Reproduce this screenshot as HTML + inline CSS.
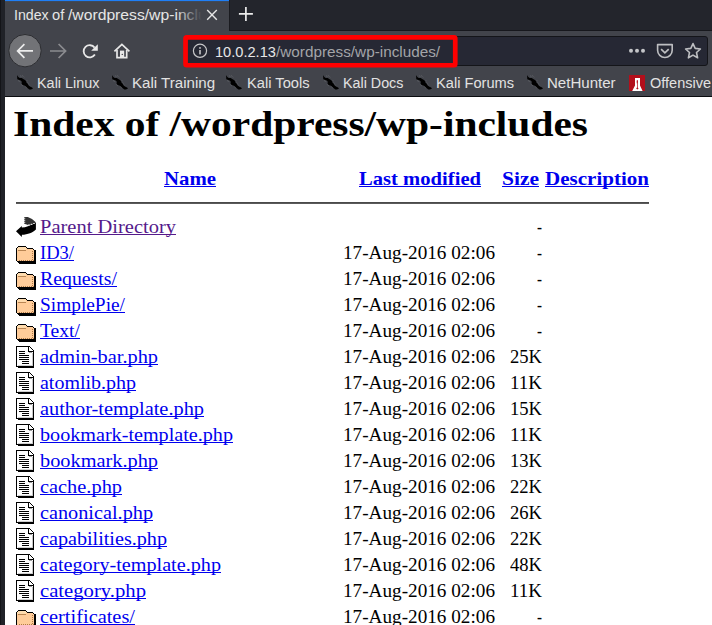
<!DOCTYPE html>
<html><head><meta charset="utf-8"><style>
html,body{margin:0;padding:0}
body{width:712px;height:625px;overflow:hidden;position:relative;background:#42444b;font-family:"Liberation Sans",sans-serif}
.ab{position:absolute}
.ab svg{display:block}
svg.ab{display:block}
.t{position:absolute;white-space:pre;line-height:1;transform-origin:0 0}
</style></head><body>
<!-- window edge -->
<div class="ab" style="left:0;top:0;width:1px;height:625px;background:#131418"></div>
<div class="ab" style="left:1px;top:0;width:4px;height:625px;background:#202228"></div>
<!-- tab bar -->
<div class="ab" style="left:229px;top:0;width:483px;height:31px;background:#23252c"></div>
<div class="ab" style="left:229px;top:0;width:1px;height:31px;background:#1a1b20"></div>
<div class="ab" style="left:230px;top:30px;width:482px;height:1px;background:#17181d"></div>
<div class="ab" style="left:5px;top:0;width:224px;height:1px;background:#1f7ff7"></div>
<div class="ab" style="left:5px;top:1px;width:224px;height:1px;background:#3a4f6e;opacity:.5"></div>
<!-- close x -->
<svg class="ab" style="left:205px;top:8px" width="14" height="14" viewBox="0 0 14 14"><path d="M2.2,2 L11.8,11.7 M11.8,2 L2.2,11.7" stroke="#e6e6e6" stroke-width="1.4"/></svg>
<!-- plus -->
<svg class="ab" style="left:237px;top:5px" width="18" height="18" viewBox="0 0 18 18"><path d="M1.9,8.8 H15.9 M8.9,2 V16" stroke="#ececec" stroke-width="1.7"/></svg>
<!-- back button -->
<svg class="ab" style="left:6px;top:32px" width="40" height="38" viewBox="0 0 40 38">
<circle cx="19" cy="18.7" r="16.2" fill="#727377" stroke="#2c2d31" stroke-width="1"/>
<path d="M11.6,18.9 H27 M18.4,12.1 L11.6,18.9 L18.4,25.9" stroke="#ececec" stroke-width="1.7" fill="none"/>
</svg>
<!-- forward -->
<svg class="ab" style="left:46px;top:40px" width="24" height="22" viewBox="0 0 24 22"><path d="M4,11 H19.6 M12.6,4 L19.6,11 L12.6,18" stroke="#8b8c90" stroke-width="1.7" fill="none"/></svg>
<!-- reload -->
<svg class="ab" style="left:80px;top:40px" width="22" height="22" viewBox="0 0 22 22">
<path d="M14.6,7.6 A6.1,6.1 0 1 0 14.9,14.6" stroke="#e8e8e8" stroke-width="1.8" fill="none"/>
<path d="M11.2,10.8 L17.8,10.8 L17.8,4.2 Z" fill="#e8e8e8"/>
</svg>
<!-- home -->
<svg class="ab" style="left:111px;top:40px" width="22" height="22" viewBox="0 0 22 22">
<path d="M3.4,11.3 L10.9,4.3 L18.4,11.3" stroke="#e8e8e8" stroke-width="1.7" fill="none"/>
<path d="M6.0,10 V17.6 H15.7 V10" stroke="#e8e8e8" stroke-width="1.7" fill="none"/>
<rect x="9" y="10.6" width="4.2" height="7" fill="#e8e8e8"/><circle cx="11.3" cy="14.4" r="0.7" fill="#42444b"/>
</svg>
<!-- url bar -->
<div class="ab" style="left:184px;top:36px;width:522px;height:28px;background:#262834;border:1px solid #141519;border-radius:3px"></div>
<!-- info icon -->
<svg class="ab" style="left:192px;top:43px" width="16" height="16" viewBox="0 0 16 16">
<circle cx="8" cy="7.8" r="6.6" stroke="#c8c8ca" stroke-width="1.2" fill="none"/>
<rect x="7.2" y="7" width="1.6" height="4.4" fill="#c8c8ca"/><circle cx="8" cy="4.9" r="0.95" fill="#c8c8ca"/>
</svg>
<!-- red annotation -->
<svg class="ab" style="left:180px;top:32px" width="282" height="40" viewBox="0 0 282 40"><rect x="5.55" y="5.35" width="269.7" height="27.9" rx="1.2" fill="none" stroke="#ff0000" stroke-width="4.7"/></svg>
<!-- dots -->
<svg class="ab" style="left:626px;top:46px" width="22" height="10" viewBox="0 0 22 10"><g fill="#c4c5c8"><circle cx="5" cy="4.8" r="2"/><circle cx="11" cy="4.8" r="2"/><circle cx="17" cy="4.8" r="2"/></g></svg>
<!-- pocket -->
<svg class="ab" style="left:654px;top:41px" width="22" height="20" viewBox="0 0 22 20">
<path d="M3.6,3.6 H18.2 V9.2 A7.3,7.3 0 0 1 3.6,9.2 Z" stroke="#bdbec1" stroke-width="1.6" fill="none" stroke-linejoin="round"/>
<path d="M7.1,8.1 L10.9,11.9 L14.7,8.1" stroke="#bdbec1" stroke-width="1.7" fill="none"/>
</svg>
<!-- star -->
<svg class="ab" style="left:683px;top:41px" width="20" height="20" viewBox="0 0 20 20">
<path d="M10,2.6 L12.2,7.4 L17.4,8 L13.5,11.5 L14.6,16.8 L10,14.1 L5.4,16.8 L6.5,11.5 L2.6,8 L7.8,7.4 Z" stroke="#bdbec1" stroke-width="1.6" fill="none" stroke-linejoin="round"/>
</svg>
<!-- bookmarks -->
<svg class="ab" style="left:16px;top:74px" width="20" height="18" viewBox="0 0 20 18">
<path d="M1.3,1.15 L2.3,2.9 L3.7,4.0 L5.8,4.0 L7.2,4.9 L8.6,5.8 L10.1,6.9 L10.4,8.6 L11.5,9.5 L12.7,11.5 L14.4,12.7 L16.1,13.5 L17,14.4 L15,15.6 L13.3,15.6 L11.5,14.1 L10.1,12.7 L8.4,11.5 L6.6,10.95 L5.5,9.5 L5.8,7.8 L4.6,6.6 L2.6,5.8 L1.3,5.2 L1.15,1.7 Z" fill="#000"/>
<path d="M4.3,1.9 L6.2,2.6 M6.6,1.7 L8.8,3.6 M11,6.6 L11.7,8.3 M12.6,9.7 L13.6,11.2 M2.2,6.6 L4.4,7.8 M4.9,10.3 L6.6,11.7 M9.5,12.8 L11.6,14.8" stroke="#8d8e92" stroke-width="0.6" stroke-dasharray="0.6 0.9" fill="none"/>
</svg>
<svg class="ab" style="left:110.8px;top:74px" width="20" height="18" viewBox="0 0 20 18">
<path d="M1.3,1.15 L2.3,2.9 L3.7,4.0 L5.8,4.0 L7.2,4.9 L8.6,5.8 L10.1,6.9 L10.4,8.6 L11.5,9.5 L12.7,11.5 L14.4,12.7 L16.1,13.5 L17,14.4 L15,15.6 L13.3,15.6 L11.5,14.1 L10.1,12.7 L8.4,11.5 L6.6,10.95 L5.5,9.5 L5.8,7.8 L4.6,6.6 L2.6,5.8 L1.3,5.2 L1.15,1.7 Z" fill="#000"/>
<path d="M4.3,1.9 L6.2,2.6 M6.6,1.7 L8.8,3.6 M11,6.6 L11.7,8.3 M12.6,9.7 L13.6,11.2 M2.2,6.6 L4.4,7.8 M4.9,10.3 L6.6,11.7 M9.5,12.8 L11.6,14.8" stroke="#8d8e92" stroke-width="0.6" stroke-dasharray="0.6 0.9" fill="none"/>
</svg>
<svg class="ab" style="left:225.4px;top:74px" width="20" height="18" viewBox="0 0 20 18">
<path d="M1.3,1.15 L2.3,2.9 L3.7,4.0 L5.8,4.0 L7.2,4.9 L8.6,5.8 L10.1,6.9 L10.4,8.6 L11.5,9.5 L12.7,11.5 L14.4,12.7 L16.1,13.5 L17,14.4 L15,15.6 L13.3,15.6 L11.5,14.1 L10.1,12.7 L8.4,11.5 L6.6,10.95 L5.5,9.5 L5.8,7.8 L4.6,6.6 L2.6,5.8 L1.3,5.2 L1.15,1.7 Z" fill="#000"/>
<path d="M4.3,1.9 L6.2,2.6 M6.6,1.7 L8.8,3.6 M11,6.6 L11.7,8.3 M12.6,9.7 L13.6,11.2 M2.2,6.6 L4.4,7.8 M4.9,10.3 L6.6,11.7 M9.5,12.8 L11.6,14.8" stroke="#8d8e92" stroke-width="0.6" stroke-dasharray="0.6 0.9" fill="none"/>
</svg>
<svg class="ab" style="left:321.8px;top:74px" width="20" height="18" viewBox="0 0 20 18">
<path d="M1.3,1.15 L2.3,2.9 L3.7,4.0 L5.8,4.0 L7.2,4.9 L8.6,5.8 L10.1,6.9 L10.4,8.6 L11.5,9.5 L12.7,11.5 L14.4,12.7 L16.1,13.5 L17,14.4 L15,15.6 L13.3,15.6 L11.5,14.1 L10.1,12.7 L8.4,11.5 L6.6,10.95 L5.5,9.5 L5.8,7.8 L4.6,6.6 L2.6,5.8 L1.3,5.2 L1.15,1.7 Z" fill="#000"/>
<path d="M4.3,1.9 L6.2,2.6 M6.6,1.7 L8.8,3.6 M11,6.6 L11.7,8.3 M12.6,9.7 L13.6,11.2 M2.2,6.6 L4.4,7.8 M4.9,10.3 L6.6,11.7 M9.5,12.8 L11.6,14.8" stroke="#8d8e92" stroke-width="0.6" stroke-dasharray="0.6 0.9" fill="none"/>
</svg>
<svg class="ab" style="left:414.7px;top:74px" width="20" height="18" viewBox="0 0 20 18">
<path d="M1.3,1.15 L2.3,2.9 L3.7,4.0 L5.8,4.0 L7.2,4.9 L8.6,5.8 L10.1,6.9 L10.4,8.6 L11.5,9.5 L12.7,11.5 L14.4,12.7 L16.1,13.5 L17,14.4 L15,15.6 L13.3,15.6 L11.5,14.1 L10.1,12.7 L8.4,11.5 L6.6,10.95 L5.5,9.5 L5.8,7.8 L4.6,6.6 L2.6,5.8 L1.3,5.2 L1.15,1.7 Z" fill="#000"/>
<path d="M4.3,1.9 L6.2,2.6 M6.6,1.7 L8.8,3.6 M11,6.6 L11.7,8.3 M12.6,9.7 L13.6,11.2 M2.2,6.6 L4.4,7.8 M4.9,10.3 L6.6,11.7 M9.5,12.8 L11.6,14.8" stroke="#8d8e92" stroke-width="0.6" stroke-dasharray="0.6 0.9" fill="none"/>
</svg>
<svg class="ab" style="left:525.5px;top:74px" width="20" height="18" viewBox="0 0 20 18">
<path d="M1.3,1.15 L2.3,2.9 L3.7,4.0 L5.8,4.0 L7.2,4.9 L8.6,5.8 L10.1,6.9 L10.4,8.6 L11.5,9.5 L12.7,11.5 L14.4,12.7 L16.1,13.5 L17,14.4 L15,15.6 L13.3,15.6 L11.5,14.1 L10.1,12.7 L8.4,11.5 L6.6,10.95 L5.5,9.5 L5.8,7.8 L4.6,6.6 L2.6,5.8 L1.3,5.2 L1.15,1.7 Z" fill="#000"/>
<path d="M4.3,1.9 L6.2,2.6 M6.6,1.7 L8.8,3.6 M11,6.6 L11.7,8.3 M12.6,9.7 L13.6,11.2 M2.2,6.6 L4.4,7.8 M4.9,10.3 L6.6,11.7 M9.5,12.8 L11.6,14.8" stroke="#8d8e92" stroke-width="0.6" stroke-dasharray="0.6 0.9" fill="none"/>
</svg>
<svg class="ab" style="left:629px;top:75px" width="16" height="16" viewBox="0 0 16 16">
<rect width="16" height="16" fill="#b30f1b"/>
<path d="M6,3 H11 V10.5 L13.6,16 H3.2 L6,10.5 Z" fill="#fff"/>
<path d="M8.3,5 C9.1,5 9.1,7 8.7,9 L8.7,12.5 L9.6,13.5 L8.3,14.6 L7.2,13.5 L8,12.5 L8,9 C7.5,7 7.5,5 8.3,5 Z" fill="#b30f1b"/>
</svg>
<!-- bottom line of chrome -->
<div class="ab" style="left:5px;top:96px;width:707px;height:1px;background:#0b0c10"></div>
<!-- page -->
<div class="ab" style="left:5px;top:97px;width:707px;height:528px;background:#fff"></div>
<div class="ab" style="left:16px;top:202px;width:633px;height:1px;background:#4a4a4a"></div>
<div class="ab" style="left:16px;top:203px;width:633px;height:1px;background:#5a5a5a"></div>
<div class="ab" style="left:16px;top:216px;width:20px;height:22px"><svg width="20" height="22" viewBox="0 0 20 22">
<path d="M0,15.3 L5.8,9.9 L5.8,11.6 C9.5,11.4 15.5,9.2 19.9,6.2 L19.9,13.4 C17.3,16.3 11.5,18.4 5.9,18.8 L5.8,21 Z" fill="#000"/>
<path d="M8.2,0.9 L11.8,0.9 L16,2.9 L19.5,6 L18.5,7.6 L12.8,9.3 L10.6,8.5 L8.2,7.7 Z" fill="#333"/>
<g fill="#fff"><rect x="8.2" y="1.8" width="1" height="1"/><rect x="8.2" y="3.8" width="1" height="1"/><rect x="8.2" y="5.8" width="1" height="1"/>
<rect x="12.2" y="8.4" width="1.6" height="1"/><rect x="14.8" y="7.8" width="1.6" height="1"/><rect x="17.3" y="7" width="1.4" height="1"/></g>
</svg></div><div class="ab" style="left:16px;top:242px;width:20px;height:22px"><svg width="20" height="22" viewBox="0 0 20 22" shape-rendering="crispEdges">
<path fill="#ffcc99" d="M1,5h9v1h7v1h1v12h-17z"/>
<rect x="2" y="5" width="8" height="3" fill="#ffdcae"/><rect x="1" y="6" width="1" height="2" fill="#ffdcae"/>
<rect x="2" y="4" width="8" height="1"/><rect x="1" y="5" width="1" height="1"/><rect x="0" y="6" width="1" height="13"/>
<rect x="10" y="5" width="1" height="1"/><rect x="11" y="6" width="6" height="1"/><rect x="17" y="7" width="1" height="1"/>
<rect x="18" y="8" width="2" height="13"/><rect x="1" y="19" width="18" height="1"/><rect x="2" y="20" width="18" height="1"/><rect x="3" y="21" width="17" height="1"/>
<rect x="2" y="8" width="8" height="1" fill="#b98552"/>
<g fill="#b07a48"><rect x="16" y="9" width="1" height="1"/><rect x="16" y="11" width="1" height="1"/><rect x="16" y="13" width="1" height="1"/><rect x="16" y="15" width="1" height="1"/><rect x="16" y="17" width="1" height="1"/>
<rect x="3" y="18" width="1" height="1"/><rect x="5" y="18" width="1" height="1"/><rect x="7" y="18" width="1" height="1"/><rect x="9" y="18" width="1" height="1"/><rect x="11" y="18" width="1" height="1"/><rect x="13" y="18" width="1" height="1"/><rect x="15" y="18" width="1" height="1"/><rect x="17" y="18" width="1" height="1"/></g>
</svg></div><div class="ab" style="left:16px;top:268px;width:20px;height:22px"><svg width="20" height="22" viewBox="0 0 20 22" shape-rendering="crispEdges">
<path fill="#ffcc99" d="M1,5h9v1h7v1h1v12h-17z"/>
<rect x="2" y="5" width="8" height="3" fill="#ffdcae"/><rect x="1" y="6" width="1" height="2" fill="#ffdcae"/>
<rect x="2" y="4" width="8" height="1"/><rect x="1" y="5" width="1" height="1"/><rect x="0" y="6" width="1" height="13"/>
<rect x="10" y="5" width="1" height="1"/><rect x="11" y="6" width="6" height="1"/><rect x="17" y="7" width="1" height="1"/>
<rect x="18" y="8" width="2" height="13"/><rect x="1" y="19" width="18" height="1"/><rect x="2" y="20" width="18" height="1"/><rect x="3" y="21" width="17" height="1"/>
<rect x="2" y="8" width="8" height="1" fill="#b98552"/>
<g fill="#b07a48"><rect x="16" y="9" width="1" height="1"/><rect x="16" y="11" width="1" height="1"/><rect x="16" y="13" width="1" height="1"/><rect x="16" y="15" width="1" height="1"/><rect x="16" y="17" width="1" height="1"/>
<rect x="3" y="18" width="1" height="1"/><rect x="5" y="18" width="1" height="1"/><rect x="7" y="18" width="1" height="1"/><rect x="9" y="18" width="1" height="1"/><rect x="11" y="18" width="1" height="1"/><rect x="13" y="18" width="1" height="1"/><rect x="15" y="18" width="1" height="1"/><rect x="17" y="18" width="1" height="1"/></g>
</svg></div><div class="ab" style="left:16px;top:294px;width:20px;height:22px"><svg width="20" height="22" viewBox="0 0 20 22" shape-rendering="crispEdges">
<path fill="#ffcc99" d="M1,5h9v1h7v1h1v12h-17z"/>
<rect x="2" y="5" width="8" height="3" fill="#ffdcae"/><rect x="1" y="6" width="1" height="2" fill="#ffdcae"/>
<rect x="2" y="4" width="8" height="1"/><rect x="1" y="5" width="1" height="1"/><rect x="0" y="6" width="1" height="13"/>
<rect x="10" y="5" width="1" height="1"/><rect x="11" y="6" width="6" height="1"/><rect x="17" y="7" width="1" height="1"/>
<rect x="18" y="8" width="2" height="13"/><rect x="1" y="19" width="18" height="1"/><rect x="2" y="20" width="18" height="1"/><rect x="3" y="21" width="17" height="1"/>
<rect x="2" y="8" width="8" height="1" fill="#b98552"/>
<g fill="#b07a48"><rect x="16" y="9" width="1" height="1"/><rect x="16" y="11" width="1" height="1"/><rect x="16" y="13" width="1" height="1"/><rect x="16" y="15" width="1" height="1"/><rect x="16" y="17" width="1" height="1"/>
<rect x="3" y="18" width="1" height="1"/><rect x="5" y="18" width="1" height="1"/><rect x="7" y="18" width="1" height="1"/><rect x="9" y="18" width="1" height="1"/><rect x="11" y="18" width="1" height="1"/><rect x="13" y="18" width="1" height="1"/><rect x="15" y="18" width="1" height="1"/><rect x="17" y="18" width="1" height="1"/></g>
</svg></div><div class="ab" style="left:16px;top:320px;width:20px;height:22px"><svg width="20" height="22" viewBox="0 0 20 22" shape-rendering="crispEdges">
<path fill="#ffcc99" d="M1,5h9v1h7v1h1v12h-17z"/>
<rect x="2" y="5" width="8" height="3" fill="#ffdcae"/><rect x="1" y="6" width="1" height="2" fill="#ffdcae"/>
<rect x="2" y="4" width="8" height="1"/><rect x="1" y="5" width="1" height="1"/><rect x="0" y="6" width="1" height="13"/>
<rect x="10" y="5" width="1" height="1"/><rect x="11" y="6" width="6" height="1"/><rect x="17" y="7" width="1" height="1"/>
<rect x="18" y="8" width="2" height="13"/><rect x="1" y="19" width="18" height="1"/><rect x="2" y="20" width="18" height="1"/><rect x="3" y="21" width="17" height="1"/>
<rect x="2" y="8" width="8" height="1" fill="#b98552"/>
<g fill="#b07a48"><rect x="16" y="9" width="1" height="1"/><rect x="16" y="11" width="1" height="1"/><rect x="16" y="13" width="1" height="1"/><rect x="16" y="15" width="1" height="1"/><rect x="16" y="17" width="1" height="1"/>
<rect x="3" y="18" width="1" height="1"/><rect x="5" y="18" width="1" height="1"/><rect x="7" y="18" width="1" height="1"/><rect x="9" y="18" width="1" height="1"/><rect x="11" y="18" width="1" height="1"/><rect x="13" y="18" width="1" height="1"/><rect x="15" y="18" width="1" height="1"/><rect x="17" y="18" width="1" height="1"/></g>
</svg></div><div class="ab" style="left:16px;top:346px;width:20px;height:22px"><svg width="20" height="22" viewBox="0 0 20 22" shape-rendering="crispEdges">
<path fill="#fff" d="M1,1h11v5h5v15h-16z"/>
<path fill="#fff" d="M12,1h1l4,4v1h-5z"/>
<rect x="2" y="19" width="15" height="1" fill="#d0d0d0"/><rect x="16" y="7" width="1" height="13" fill="#c8c8c8"/>
<rect x="13" y="6" width="3" height="1" fill="#a0a0a0"/>
<rect x="0" y="0" width="13" height="1"/><rect x="0" y="1" width="1" height="20"/>
<rect x="12" y="1" width="1" height="5"/><rect x="12" y="5" width="6" height="1"/>
<path d="M13,0h0.6l4.4,4.4v0.6h-1z" />
<rect x="17" y="5" width="1" height="17"/><rect x="1" y="20" width="17" height="1"/><rect x="2" y="21" width="16" height="1"/>
<rect x="3" y="5" width="6" height="1"/><rect x="3" y="7" width="6" height="1"/>
<rect x="3" y="9" width="10" height="1"/><rect x="3" y="11" width="10" height="1"/><rect x="3" y="13" width="10" height="1"/>
<rect x="6" y="15" width="7" height="1"/><rect x="6" y="17" width="7" height="1"/>
</svg></div><div class="ab" style="left:16px;top:372px;width:20px;height:22px"><svg width="20" height="22" viewBox="0 0 20 22" shape-rendering="crispEdges">
<path fill="#fff" d="M1,1h11v5h5v15h-16z"/>
<path fill="#fff" d="M12,1h1l4,4v1h-5z"/>
<rect x="2" y="19" width="15" height="1" fill="#d0d0d0"/><rect x="16" y="7" width="1" height="13" fill="#c8c8c8"/>
<rect x="13" y="6" width="3" height="1" fill="#a0a0a0"/>
<rect x="0" y="0" width="13" height="1"/><rect x="0" y="1" width="1" height="20"/>
<rect x="12" y="1" width="1" height="5"/><rect x="12" y="5" width="6" height="1"/>
<path d="M13,0h0.6l4.4,4.4v0.6h-1z" />
<rect x="17" y="5" width="1" height="17"/><rect x="1" y="20" width="17" height="1"/><rect x="2" y="21" width="16" height="1"/>
<rect x="3" y="5" width="6" height="1"/><rect x="3" y="7" width="6" height="1"/>
<rect x="3" y="9" width="10" height="1"/><rect x="3" y="11" width="10" height="1"/><rect x="3" y="13" width="10" height="1"/>
<rect x="6" y="15" width="7" height="1"/><rect x="6" y="17" width="7" height="1"/>
</svg></div><div class="ab" style="left:16px;top:398px;width:20px;height:22px"><svg width="20" height="22" viewBox="0 0 20 22" shape-rendering="crispEdges">
<path fill="#fff" d="M1,1h11v5h5v15h-16z"/>
<path fill="#fff" d="M12,1h1l4,4v1h-5z"/>
<rect x="2" y="19" width="15" height="1" fill="#d0d0d0"/><rect x="16" y="7" width="1" height="13" fill="#c8c8c8"/>
<rect x="13" y="6" width="3" height="1" fill="#a0a0a0"/>
<rect x="0" y="0" width="13" height="1"/><rect x="0" y="1" width="1" height="20"/>
<rect x="12" y="1" width="1" height="5"/><rect x="12" y="5" width="6" height="1"/>
<path d="M13,0h0.6l4.4,4.4v0.6h-1z" />
<rect x="17" y="5" width="1" height="17"/><rect x="1" y="20" width="17" height="1"/><rect x="2" y="21" width="16" height="1"/>
<rect x="3" y="5" width="6" height="1"/><rect x="3" y="7" width="6" height="1"/>
<rect x="3" y="9" width="10" height="1"/><rect x="3" y="11" width="10" height="1"/><rect x="3" y="13" width="10" height="1"/>
<rect x="6" y="15" width="7" height="1"/><rect x="6" y="17" width="7" height="1"/>
</svg></div><div class="ab" style="left:16px;top:424px;width:20px;height:22px"><svg width="20" height="22" viewBox="0 0 20 22" shape-rendering="crispEdges">
<path fill="#fff" d="M1,1h11v5h5v15h-16z"/>
<path fill="#fff" d="M12,1h1l4,4v1h-5z"/>
<rect x="2" y="19" width="15" height="1" fill="#d0d0d0"/><rect x="16" y="7" width="1" height="13" fill="#c8c8c8"/>
<rect x="13" y="6" width="3" height="1" fill="#a0a0a0"/>
<rect x="0" y="0" width="13" height="1"/><rect x="0" y="1" width="1" height="20"/>
<rect x="12" y="1" width="1" height="5"/><rect x="12" y="5" width="6" height="1"/>
<path d="M13,0h0.6l4.4,4.4v0.6h-1z" />
<rect x="17" y="5" width="1" height="17"/><rect x="1" y="20" width="17" height="1"/><rect x="2" y="21" width="16" height="1"/>
<rect x="3" y="5" width="6" height="1"/><rect x="3" y="7" width="6" height="1"/>
<rect x="3" y="9" width="10" height="1"/><rect x="3" y="11" width="10" height="1"/><rect x="3" y="13" width="10" height="1"/>
<rect x="6" y="15" width="7" height="1"/><rect x="6" y="17" width="7" height="1"/>
</svg></div><div class="ab" style="left:16px;top:450px;width:20px;height:22px"><svg width="20" height="22" viewBox="0 0 20 22" shape-rendering="crispEdges">
<path fill="#fff" d="M1,1h11v5h5v15h-16z"/>
<path fill="#fff" d="M12,1h1l4,4v1h-5z"/>
<rect x="2" y="19" width="15" height="1" fill="#d0d0d0"/><rect x="16" y="7" width="1" height="13" fill="#c8c8c8"/>
<rect x="13" y="6" width="3" height="1" fill="#a0a0a0"/>
<rect x="0" y="0" width="13" height="1"/><rect x="0" y="1" width="1" height="20"/>
<rect x="12" y="1" width="1" height="5"/><rect x="12" y="5" width="6" height="1"/>
<path d="M13,0h0.6l4.4,4.4v0.6h-1z" />
<rect x="17" y="5" width="1" height="17"/><rect x="1" y="20" width="17" height="1"/><rect x="2" y="21" width="16" height="1"/>
<rect x="3" y="5" width="6" height="1"/><rect x="3" y="7" width="6" height="1"/>
<rect x="3" y="9" width="10" height="1"/><rect x="3" y="11" width="10" height="1"/><rect x="3" y="13" width="10" height="1"/>
<rect x="6" y="15" width="7" height="1"/><rect x="6" y="17" width="7" height="1"/>
</svg></div><div class="ab" style="left:16px;top:476px;width:20px;height:22px"><svg width="20" height="22" viewBox="0 0 20 22" shape-rendering="crispEdges">
<path fill="#fff" d="M1,1h11v5h5v15h-16z"/>
<path fill="#fff" d="M12,1h1l4,4v1h-5z"/>
<rect x="2" y="19" width="15" height="1" fill="#d0d0d0"/><rect x="16" y="7" width="1" height="13" fill="#c8c8c8"/>
<rect x="13" y="6" width="3" height="1" fill="#a0a0a0"/>
<rect x="0" y="0" width="13" height="1"/><rect x="0" y="1" width="1" height="20"/>
<rect x="12" y="1" width="1" height="5"/><rect x="12" y="5" width="6" height="1"/>
<path d="M13,0h0.6l4.4,4.4v0.6h-1z" />
<rect x="17" y="5" width="1" height="17"/><rect x="1" y="20" width="17" height="1"/><rect x="2" y="21" width="16" height="1"/>
<rect x="3" y="5" width="6" height="1"/><rect x="3" y="7" width="6" height="1"/>
<rect x="3" y="9" width="10" height="1"/><rect x="3" y="11" width="10" height="1"/><rect x="3" y="13" width="10" height="1"/>
<rect x="6" y="15" width="7" height="1"/><rect x="6" y="17" width="7" height="1"/>
</svg></div><div class="ab" style="left:16px;top:502px;width:20px;height:22px"><svg width="20" height="22" viewBox="0 0 20 22" shape-rendering="crispEdges">
<path fill="#fff" d="M1,1h11v5h5v15h-16z"/>
<path fill="#fff" d="M12,1h1l4,4v1h-5z"/>
<rect x="2" y="19" width="15" height="1" fill="#d0d0d0"/><rect x="16" y="7" width="1" height="13" fill="#c8c8c8"/>
<rect x="13" y="6" width="3" height="1" fill="#a0a0a0"/>
<rect x="0" y="0" width="13" height="1"/><rect x="0" y="1" width="1" height="20"/>
<rect x="12" y="1" width="1" height="5"/><rect x="12" y="5" width="6" height="1"/>
<path d="M13,0h0.6l4.4,4.4v0.6h-1z" />
<rect x="17" y="5" width="1" height="17"/><rect x="1" y="20" width="17" height="1"/><rect x="2" y="21" width="16" height="1"/>
<rect x="3" y="5" width="6" height="1"/><rect x="3" y="7" width="6" height="1"/>
<rect x="3" y="9" width="10" height="1"/><rect x="3" y="11" width="10" height="1"/><rect x="3" y="13" width="10" height="1"/>
<rect x="6" y="15" width="7" height="1"/><rect x="6" y="17" width="7" height="1"/>
</svg></div><div class="ab" style="left:16px;top:528px;width:20px;height:22px"><svg width="20" height="22" viewBox="0 0 20 22" shape-rendering="crispEdges">
<path fill="#fff" d="M1,1h11v5h5v15h-16z"/>
<path fill="#fff" d="M12,1h1l4,4v1h-5z"/>
<rect x="2" y="19" width="15" height="1" fill="#d0d0d0"/><rect x="16" y="7" width="1" height="13" fill="#c8c8c8"/>
<rect x="13" y="6" width="3" height="1" fill="#a0a0a0"/>
<rect x="0" y="0" width="13" height="1"/><rect x="0" y="1" width="1" height="20"/>
<rect x="12" y="1" width="1" height="5"/><rect x="12" y="5" width="6" height="1"/>
<path d="M13,0h0.6l4.4,4.4v0.6h-1z" />
<rect x="17" y="5" width="1" height="17"/><rect x="1" y="20" width="17" height="1"/><rect x="2" y="21" width="16" height="1"/>
<rect x="3" y="5" width="6" height="1"/><rect x="3" y="7" width="6" height="1"/>
<rect x="3" y="9" width="10" height="1"/><rect x="3" y="11" width="10" height="1"/><rect x="3" y="13" width="10" height="1"/>
<rect x="6" y="15" width="7" height="1"/><rect x="6" y="17" width="7" height="1"/>
</svg></div><div class="ab" style="left:16px;top:554px;width:20px;height:22px"><svg width="20" height="22" viewBox="0 0 20 22" shape-rendering="crispEdges">
<path fill="#fff" d="M1,1h11v5h5v15h-16z"/>
<path fill="#fff" d="M12,1h1l4,4v1h-5z"/>
<rect x="2" y="19" width="15" height="1" fill="#d0d0d0"/><rect x="16" y="7" width="1" height="13" fill="#c8c8c8"/>
<rect x="13" y="6" width="3" height="1" fill="#a0a0a0"/>
<rect x="0" y="0" width="13" height="1"/><rect x="0" y="1" width="1" height="20"/>
<rect x="12" y="1" width="1" height="5"/><rect x="12" y="5" width="6" height="1"/>
<path d="M13,0h0.6l4.4,4.4v0.6h-1z" />
<rect x="17" y="5" width="1" height="17"/><rect x="1" y="20" width="17" height="1"/><rect x="2" y="21" width="16" height="1"/>
<rect x="3" y="5" width="6" height="1"/><rect x="3" y="7" width="6" height="1"/>
<rect x="3" y="9" width="10" height="1"/><rect x="3" y="11" width="10" height="1"/><rect x="3" y="13" width="10" height="1"/>
<rect x="6" y="15" width="7" height="1"/><rect x="6" y="17" width="7" height="1"/>
</svg></div><div class="ab" style="left:16px;top:580px;width:20px;height:22px"><svg width="20" height="22" viewBox="0 0 20 22" shape-rendering="crispEdges">
<path fill="#fff" d="M1,1h11v5h5v15h-16z"/>
<path fill="#fff" d="M12,1h1l4,4v1h-5z"/>
<rect x="2" y="19" width="15" height="1" fill="#d0d0d0"/><rect x="16" y="7" width="1" height="13" fill="#c8c8c8"/>
<rect x="13" y="6" width="3" height="1" fill="#a0a0a0"/>
<rect x="0" y="0" width="13" height="1"/><rect x="0" y="1" width="1" height="20"/>
<rect x="12" y="1" width="1" height="5"/><rect x="12" y="5" width="6" height="1"/>
<path d="M13,0h0.6l4.4,4.4v0.6h-1z" />
<rect x="17" y="5" width="1" height="17"/><rect x="1" y="20" width="17" height="1"/><rect x="2" y="21" width="16" height="1"/>
<rect x="3" y="5" width="6" height="1"/><rect x="3" y="7" width="6" height="1"/>
<rect x="3" y="9" width="10" height="1"/><rect x="3" y="11" width="10" height="1"/><rect x="3" y="13" width="10" height="1"/>
<rect x="6" y="15" width="7" height="1"/><rect x="6" y="17" width="7" height="1"/>
</svg></div><div class="ab" style="left:16px;top:606px;width:20px;height:22px"><svg width="20" height="22" viewBox="0 0 20 22" shape-rendering="crispEdges">
<path fill="#ffcc99" d="M1,5h9v1h7v1h1v12h-17z"/>
<rect x="2" y="5" width="8" height="3" fill="#ffdcae"/><rect x="1" y="6" width="1" height="2" fill="#ffdcae"/>
<rect x="2" y="4" width="8" height="1"/><rect x="1" y="5" width="1" height="1"/><rect x="0" y="6" width="1" height="13"/>
<rect x="10" y="5" width="1" height="1"/><rect x="11" y="6" width="6" height="1"/><rect x="17" y="7" width="1" height="1"/>
<rect x="18" y="8" width="2" height="13"/><rect x="1" y="19" width="18" height="1"/><rect x="2" y="20" width="18" height="1"/><rect x="3" y="21" width="17" height="1"/>
<rect x="2" y="8" width="8" height="1" fill="#b98552"/>
<g fill="#b07a48"><rect x="16" y="9" width="1" height="1"/><rect x="16" y="11" width="1" height="1"/><rect x="16" y="13" width="1" height="1"/><rect x="16" y="15" width="1" height="1"/><rect x="16" y="17" width="1" height="1"/>
<rect x="3" y="18" width="1" height="1"/><rect x="5" y="18" width="1" height="1"/><rect x="7" y="18" width="1" height="1"/><rect x="9" y="18" width="1" height="1"/><rect x="11" y="18" width="1" height="1"/><rect x="13" y="18" width="1" height="1"/><rect x="15" y="18" width="1" height="1"/><rect x="17" y="18" width="1" height="1"/></g>
</svg></div>
<div class="t" style="left:13.00px;top:107px;font-family:'Liberation Serif';font-size:35.6px;font-weight:bold;color:#000;transform:scaleX(1.1650)">Index of /wordpress/wp-includes</div>
<div class="t" style="left:164.00px;top:171px;font-family:'Liberation Serif';font-size:17.8px;font-weight:bold;color:#0000ee;transform:scaleX(1.1702)">Name</div>
<div style="position:absolute;left:164px;top:186px;width:52px;height:1px;background:#0000ee"></div>
<div class="t" style="left:359.00px;top:171px;font-family:'Liberation Serif';font-size:17.8px;font-weight:bold;color:#0000ee;transform:scaleX(1.1596)">Last modified</div>
<div style="position:absolute;left:359px;top:186px;width:122px;height:1px;background:#0000ee"></div>
<div class="t" style="left:502.00px;top:171px;font-family:'Liberation Serif';font-size:17.8px;font-weight:bold;color:#0000ee;transform:scaleX(1.2086)">Size</div>
<div style="position:absolute;left:502px;top:186px;width:37px;height:1px;background:#0000ee"></div>
<div class="t" style="left:545.00px;top:171px;font-family:'Liberation Serif';font-size:17.8px;font-weight:bold;color:#0000ee;transform:scaleX(1.1831)">Description</div>
<div style="position:absolute;left:545px;top:186px;width:104px;height:1px;background:#0000ee"></div>
<div class="t" style="left:40.00px;top:219px;font-family:'Liberation Serif';font-size:17.8px;font-weight:normal;color:#551a8b;transform:scaleX(1.1525)">Parent Directory</div>
<div style="position:absolute;left:40px;top:234px;width:136px;height:1px;background:#551a8b"></div>
<div class="t" style="left:537.00px;top:219px;font-family:'Liberation Serif';font-size:17.8px;font-weight:normal;color:#000;transform:scaleX(0.8444)">-</div>
<div class="t" style="left:40.00px;top:245px;font-family:'Liberation Serif';font-size:17.8px;font-weight:normal;color:#0000ee;transform:scaleX(1.0432)">ID3/</div>
<div style="position:absolute;left:40px;top:260px;width:34px;height:1px;background:#0000ee"></div>
<div class="t" style="left:342.80px;top:245px;font-family:'Liberation Serif';font-size:17.8px;font-weight:normal;color:#000;transform:scaleX(1.0799)">17-Aug-2016 02:06</div>
<div class="t" style="left:537.00px;top:245px;font-family:'Liberation Serif';font-size:17.8px;font-weight:normal;color:#000;transform:scaleX(0.8444)">-</div>
<div class="t" style="left:40.00px;top:271px;font-family:'Liberation Serif';font-size:17.8px;font-weight:normal;color:#0000ee;transform:scaleX(1.1136)">Requests/</div>
<div style="position:absolute;left:40px;top:286px;width:77px;height:1px;background:#0000ee"></div>
<div class="t" style="left:342.80px;top:271px;font-family:'Liberation Serif';font-size:17.8px;font-weight:normal;color:#000;transform:scaleX(1.0799)">17-Aug-2016 02:06</div>
<div class="t" style="left:537.00px;top:271px;font-family:'Liberation Serif';font-size:17.8px;font-weight:normal;color:#000;transform:scaleX(0.8444)">-</div>
<div class="t" style="left:40.00px;top:297px;font-family:'Liberation Serif';font-size:17.8px;font-weight:normal;color:#0000ee;transform:scaleX(1.0891)">SimplePie/</div>
<div style="position:absolute;left:40px;top:312px;width:85px;height:1px;background:#0000ee"></div>
<div class="t" style="left:342.80px;top:297px;font-family:'Liberation Serif';font-size:17.8px;font-weight:normal;color:#000;transform:scaleX(1.0799)">17-Aug-2016 02:06</div>
<div class="t" style="left:537.00px;top:297px;font-family:'Liberation Serif';font-size:17.8px;font-weight:normal;color:#000;transform:scaleX(0.8444)">-</div>
<div class="t" style="left:40.00px;top:323px;font-family:'Liberation Serif';font-size:17.8px;font-weight:normal;color:#0000ee;transform:scaleX(1.1025)">Text/</div>
<div style="position:absolute;left:40px;top:338px;width:40px;height:1px;background:#0000ee"></div>
<div class="t" style="left:342.80px;top:323px;font-family:'Liberation Serif';font-size:17.8px;font-weight:normal;color:#000;transform:scaleX(1.0799)">17-Aug-2016 02:06</div>
<div class="t" style="left:537.00px;top:323px;font-family:'Liberation Serif';font-size:17.8px;font-weight:normal;color:#000;transform:scaleX(0.8444)">-</div>
<div class="t" style="left:40.00px;top:349px;font-family:'Liberation Serif';font-size:17.8px;font-weight:normal;color:#0000ee;transform:scaleX(1.1434)">admin-bar.php</div>
<div style="position:absolute;left:40px;top:364px;width:118px;height:1px;background:#0000ee"></div>
<div class="t" style="left:342.80px;top:349px;font-family:'Liberation Serif';font-size:17.8px;font-weight:normal;color:#000;transform:scaleX(1.0799)">17-Aug-2016 02:06</div>
<div class="t" style="left:510.00px;top:349px;font-family:'Liberation Serif';font-size:17.8px;font-weight:normal;color:#000;transform:scaleX(1.0450)">25K</div>
<div class="t" style="left:40.00px;top:375px;font-family:'Liberation Serif';font-size:17.8px;font-weight:normal;color:#0000ee;transform:scaleX(1.1236)">atomlib.php</div>
<div style="position:absolute;left:40px;top:390px;width:96px;height:1px;background:#0000ee"></div>
<div class="t" style="left:342.80px;top:375px;font-family:'Liberation Serif';font-size:17.8px;font-weight:normal;color:#000;transform:scaleX(1.0799)">17-Aug-2016 02:06</div>
<div class="t" style="left:510.00px;top:375px;font-family:'Liberation Serif';font-size:17.8px;font-weight:normal;color:#000;transform:scaleX(1.0680)">11K</div>
<div class="t" style="left:40.00px;top:401px;font-family:'Liberation Serif';font-size:17.8px;font-weight:normal;color:#0000ee;transform:scaleX(1.1442)">author-template.php</div>
<div style="position:absolute;left:40px;top:416px;width:164px;height:1px;background:#0000ee"></div>
<div class="t" style="left:342.80px;top:401px;font-family:'Liberation Serif';font-size:17.8px;font-weight:normal;color:#000;transform:scaleX(1.0799)">17-Aug-2016 02:06</div>
<div class="t" style="left:510.00px;top:401px;font-family:'Liberation Serif';font-size:17.8px;font-weight:normal;color:#000;transform:scaleX(1.0450)">15K</div>
<div class="t" style="left:40.00px;top:427px;font-family:'Liberation Serif';font-size:17.8px;font-weight:normal;color:#0000ee;transform:scaleX(1.1329)">bookmark-template.php</div>
<div style="position:absolute;left:40px;top:442px;width:193px;height:1px;background:#0000ee"></div>
<div class="t" style="left:342.80px;top:427px;font-family:'Liberation Serif';font-size:17.8px;font-weight:normal;color:#000;transform:scaleX(1.0799)">17-Aug-2016 02:06</div>
<div class="t" style="left:510.00px;top:427px;font-family:'Liberation Serif';font-size:17.8px;font-weight:normal;color:#000;transform:scaleX(1.0680)">11K</div>
<div class="t" style="left:40.00px;top:453px;font-family:'Liberation Serif';font-size:17.8px;font-weight:normal;color:#0000ee;transform:scaleX(1.1432)">bookmark.php</div>
<div style="position:absolute;left:40px;top:468px;width:118px;height:1px;background:#0000ee"></div>
<div class="t" style="left:342.80px;top:453px;font-family:'Liberation Serif';font-size:17.8px;font-weight:normal;color:#000;transform:scaleX(1.0799)">17-Aug-2016 02:06</div>
<div class="t" style="left:510.00px;top:453px;font-family:'Liberation Serif';font-size:17.8px;font-weight:normal;color:#000;transform:scaleX(1.0450)">13K</div>
<div class="t" style="left:40.00px;top:479px;font-family:'Liberation Serif';font-size:17.8px;font-weight:normal;color:#0000ee;transform:scaleX(1.1456)">cache.php</div>
<div style="position:absolute;left:40px;top:494px;width:82px;height:1px;background:#0000ee"></div>
<div class="t" style="left:342.80px;top:479px;font-family:'Liberation Serif';font-size:17.8px;font-weight:normal;color:#000;transform:scaleX(1.0799)">17-Aug-2016 02:06</div>
<div class="t" style="left:510.00px;top:479px;font-family:'Liberation Serif';font-size:17.8px;font-weight:normal;color:#000;transform:scaleX(1.0450)">22K</div>
<div class="t" style="left:40.00px;top:505px;font-family:'Liberation Serif';font-size:17.8px;font-weight:normal;color:#0000ee;transform:scaleX(1.1387)">canonical.php</div>
<div style="position:absolute;left:40px;top:520px;width:113px;height:1px;background:#0000ee"></div>
<div class="t" style="left:342.80px;top:505px;font-family:'Liberation Serif';font-size:17.8px;font-weight:normal;color:#000;transform:scaleX(1.0799)">17-Aug-2016 02:06</div>
<div class="t" style="left:510.00px;top:505px;font-family:'Liberation Serif';font-size:17.8px;font-weight:normal;color:#000;transform:scaleX(1.0450)">26K</div>
<div class="t" style="left:40.00px;top:531px;font-family:'Liberation Serif';font-size:17.8px;font-weight:normal;color:#0000ee;transform:scaleX(1.1330)">capabilities.php</div>
<div style="position:absolute;left:40px;top:546px;width:127px;height:1px;background:#0000ee"></div>
<div class="t" style="left:342.80px;top:531px;font-family:'Liberation Serif';font-size:17.8px;font-weight:normal;color:#000;transform:scaleX(1.0799)">17-Aug-2016 02:06</div>
<div class="t" style="left:510.00px;top:531px;font-family:'Liberation Serif';font-size:17.8px;font-weight:normal;color:#000;transform:scaleX(1.0450)">22K</div>
<div class="t" style="left:40.00px;top:557px;font-family:'Liberation Serif';font-size:17.8px;font-weight:normal;color:#0000ee;transform:scaleX(1.1350)">category-template.php</div>
<div style="position:absolute;left:40px;top:572px;width:181px;height:1px;background:#0000ee"></div>
<div class="t" style="left:342.80px;top:557px;font-family:'Liberation Serif';font-size:17.8px;font-weight:normal;color:#000;transform:scaleX(1.0799)">17-Aug-2016 02:06</div>
<div class="t" style="left:510.00px;top:557px;font-family:'Liberation Serif';font-size:17.8px;font-weight:normal;color:#000;transform:scaleX(1.0450)">48K</div>
<div class="t" style="left:40.00px;top:583px;font-family:'Liberation Serif';font-size:17.8px;font-weight:normal;color:#0000ee;transform:scaleX(1.1626)">category.php</div>
<div style="position:absolute;left:40px;top:598px;width:106px;height:1px;background:#0000ee"></div>
<div class="t" style="left:342.80px;top:583px;font-family:'Liberation Serif';font-size:17.8px;font-weight:normal;color:#000;transform:scaleX(1.0799)">17-Aug-2016 02:06</div>
<div class="t" style="left:510.00px;top:583px;font-family:'Liberation Serif';font-size:17.8px;font-weight:normal;color:#000;transform:scaleX(1.0680)">11K</div>
<div class="t" style="left:40.00px;top:609px;font-family:'Liberation Serif';font-size:17.8px;font-weight:normal;color:#0000ee;transform:scaleX(1.1456)">certificates/</div>
<div style="position:absolute;left:40px;top:624px;width:95px;height:1px;background:#0000ee"></div>
<div class="t" style="left:342.80px;top:609px;font-family:'Liberation Serif';font-size:17.8px;font-weight:normal;color:#000;transform:scaleX(1.0799)">17-Aug-2016 02:06</div>
<div class="t" style="left:537.00px;top:609px;font-family:'Liberation Serif';font-size:17.8px;font-weight:normal;color:#000;transform:scaleX(0.8444)">-</div>
<div class="t" style="left:13.99px;top:7px;font-family:'Liberation Sans';font-size:15.5px;font-weight:normal;color:#e6e6e6;transform:scaleX(0.9148)">Index</div>
<div class="t" style="left:52.30px;top:7px;font-family:'Liberation Sans';font-size:15.5px;font-weight:normal;color:#e6e6e6;transform:scaleX(0.9471)">of</div>
<div style="position:absolute;left:5px;top:0;width:198px;height:31px;overflow:hidden"><div class="t" style="left:63.00px;top:7px;font-family:'Liberation Sans';font-size:15.5px;font-weight:normal;color:#e6e6e6;transform:scaleX(1.0125)">/wordpress/wp-includes</div></div>
<div class="t" style="left:215.26px;top:44px;font-family:'Liberation Sans';font-size:15.5px;font-weight:normal;color:#e6e6e6;transform:scaleX(0.9425)">10.0.2.13</div>
<div class="t" style="left:276.20px;top:44px;font-family:'Liberation Sans';font-size:15.5px;font-weight:normal;color:#a3a4a8;transform:scaleX(0.9871)">/wordpress/wp-includes/</div>
<div class="t" style="left:37.17px;top:75px;font-family:'Liberation Sans';font-size:15.5px;font-weight:normal;color:#e2e2e2;transform:scaleX(0.9299)">Kali Linux</div>
<div class="t" style="left:131.83px;top:75px;font-family:'Liberation Sans';font-size:15.5px;font-weight:normal;color:#e2e2e2;transform:scaleX(0.9743)">Kali Training</div>
<div class="t" style="left:246.95px;top:75px;font-family:'Liberation Sans';font-size:15.5px;font-weight:normal;color:#e2e2e2;transform:scaleX(0.9484)">Kali Tools</div>
<div class="t" style="left:342.88px;top:75px;font-family:'Liberation Sans';font-size:15.5px;font-weight:normal;color:#e2e2e2;transform:scaleX(0.9225)">Kali Docs</div>
<div class="t" style="left:435.76px;top:75px;font-family:'Liberation Sans';font-size:15.5px;font-weight:normal;color:#e2e2e2;transform:scaleX(0.9434)">Kali Forums</div>
<div class="t" style="left:547.13px;top:75px;font-family:'Liberation Sans';font-size:15.5px;font-weight:normal;color:#e2e2e2;transform:scaleX(0.9715)">NetHunter</div>
<div class="t" style="left:649.80px;top:75px;font-family:'Liberation Sans';font-size:15.5px;font-weight:normal;color:#e2e2e2;transform:scaleX(0.9354)">Offensive</div>
<!-- tab title fade -->
<div class="ab" style="left:176px;top:4px;width:28px;height:22px;background:linear-gradient(to right, rgba(66,68,75,0), #42444b 92%)"></div>
</body></html>
